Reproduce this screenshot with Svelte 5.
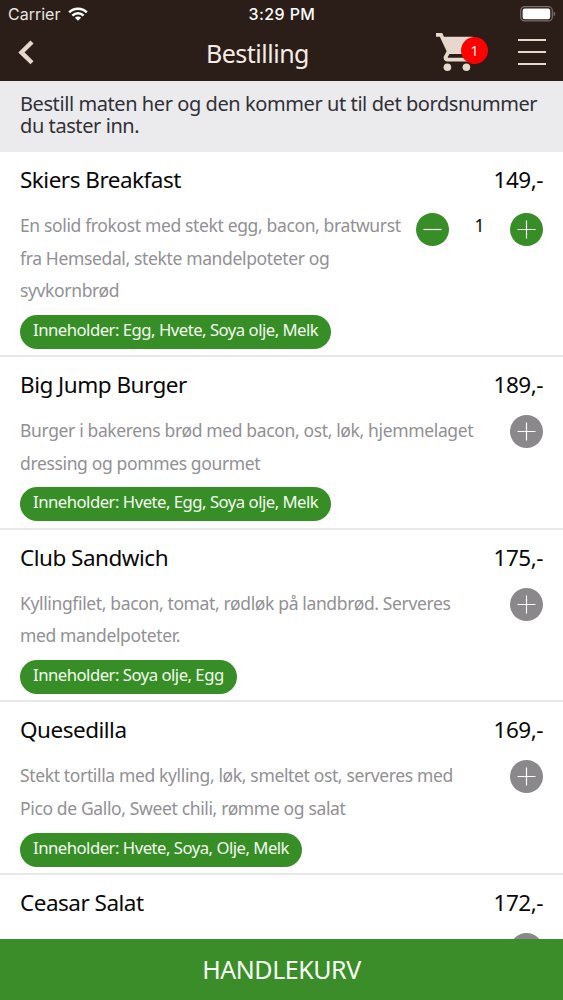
<script lang="ts">
  interface Dish {
    name: string;
    price: number;
    description: string;
    allergens: string;
    count: number;
  }

  let dishes: Dish[] = $state([
    {
      name: 'Skiers Breakfast',
      price: 149,
      description: 'En solid frokost med stekt egg, bacon, bratwurst\nfra Hemsedal, stekte mandelpoteter og\nsyvkornbrød',
      allergens: 'Egg, Hvete, Soya olje, Melk',
      count: 1
    },
    {
      name: 'Big Jump Burger',
      price: 189,
      description: 'Burger i bakerens brød med bacon, ost, løk, hjemmelaget\ndressing og pommes gourmet',
      allergens: 'Hvete, Egg, Soya olje, Melk',
      count: 0
    },
    {
      name: 'Club Sandwich',
      price: 175,
      description: 'Kyllingfilet, bacon, tomat, rødløk på landbrød. Serveres\nmed mandelpoteter.',
      allergens: 'Soya olje, Egg',
      count: 0
    },
    {
      name: 'Quesedilla',
      price: 169,
      description: 'Stekt tortilla med kylling, løk, smeltet ost, serveres med\nPico de Gallo, Sweet chili, rømme og salat',
      allergens: 'Hvete, Soya, Olje, Melk',
      count: 0
    },
    {
      name: 'Ceasar Salat',
      price: 172,
      description: '',
      allergens: '',
      count: 0
    }
  ]);

  let total = $derived(dishes.reduce((sum, dish) => sum + dish.count, 0));
</script>

<div class="screen">
  <header>
    <div class="status">
      <div class="carrier">
        <span>Carrier</span>
        <svg width="20" height="14" viewBox="0 0 20 14" fill="none" stroke="#fff" stroke-width="2.5">
          <path d="M1.2 5.4a12.4 12.4 0 0 1 17.6 0" />
          <path d="M4.4 8.6a7.9 7.9 0 0 1 11.2 0" />
          <path d="M10 13.8 6.9 10.7a4.4 4.4 0 0 1 6.2 0z" fill="#fff" stroke="none" />
        </svg>
      </div>
      <span class="time">3:29 PM</span>
      <svg class="battery" width="36" height="16" viewBox="0 0 36 16">
        <rect x="0.7" y="0.7" width="31.6" height="14.2" rx="4" fill="none" stroke="#77706c" stroke-width="1.2" />
        <rect x="2.6" y="2.6" width="27.6" height="10.6" rx="2.2" fill="#fff" />
        <path d="M33.6 5.2q1.7 1 1.7 2.6t-1.7 2.6z" fill="#77706c" />
      </svg>
    </div>

    <div class="nav">
      <button class="back" aria-label="Tilbake">
        <svg width="16" height="25" viewBox="0 0 16 25" fill="none" stroke="#e6d8cd" stroke-width="4.4">
          <path d="M14 2 3.4 12.4 14 22.8" />
        </svg>
      </button>
      <h1>Bestilling</h1>
      <button class="cart" aria-label="Handlekurv">
        <svg width="38" height="38" viewBox="1 2 20 20" fill="#e6d8cd">
          <path d="M1 2v2h2l3.600 7.590-1.350 2.450c-.16.280-.25.610-.25.960 0 1.100.9 2 2 2h12v-2H7.420c-.14 0-.25-.11-.25-.25l.03-.12.9-1.630h7.450c.75 0 1.410-.41 1.750-1.030l3.580-6.490A1 1 0 0 0 20 4H5.210l-.94-2H1z" />
          <circle cx="7" cy="20" r="2" />
          <circle cx="17" cy="20" r="2" />
        </svg>
        <span class="badge">{total}</span>
      </button>
      <button class="menu" aria-label="Meny">
        <i></i><i></i><i></i>
      </button>
    </div>
  </header>

  <p class="intro">Bestill maten her og den kommer ut til det bordsnummer<br />du taster inn.</p>

  <main>
    {#each dishes as dish}
      <article>
        <div class="heading">
          <h2>{dish.name}</h2>
          <span class="price">{dish.price},-</span>
        </div>
        <div class="details">
          <p class="description">{dish.description}</p>
          <div class="stepper" class:chosen={dish.count > 0}>
            {#if dish.count > 0}
              <button aria-label="Fjern" onclick={() => dish.count--}>
                <svg width="19" height="19" viewBox="0 0 19 19" stroke="#fff" stroke-width="1.2">
                  <path d="M.5 9.500h18" />
                </svg>
              </button>
              <span class="count">{dish.count}</span>
            {/if}
            <button aria-label="Legg til" onclick={() => dish.count++}>
              <svg width="19" height="19" viewBox="0 0 19 19" stroke="#fff" stroke-width="1.2">
                <path d="M.5 9.500h18M9.500 .5v18" />
              </svg>
            </button>
          </div>
        </div>
        {#if dish.allergens}
          <span class="allergens">Inneholder: {dish.allergens}</span>
        {/if}
      </article>
    {/each}
  </main>

  <button class="checkout">HANDLEKURV</button>
</div>

<style>
  :global(body) {
    margin: 0;
    background: #fff;
  }

  .screen {
    display: flex;
    flex-direction: column;
    height: 1000px;
    overflow: hidden;
    font-family: "Noto Sans", "Open Sans", sans-serif;
    color: #080808;
  }

  button {
    border: 0;
    padding: 0;
    background: none;
    font: inherit;
    color: inherit;
  }

  svg {
    display: block;
  }

  h1,
  h2,
  p {
    margin: 0;
    font-weight: 400;
  }

  header {
    flex: none;
    height: 81px;
    background: #2b1d18;
  }

  .status {
    display: grid;
    grid-template-columns: 1fr auto 1fr;
    align-items: center;
    height: 28px;
    padding: 0 7px 0 8px;
    font-family: Inter, "Liberation Sans", sans-serif;
    font-size: 16px;
    color: #fff;
  }

  .carrier {
    display: flex;
    align-items: center;
    gap: 8px;
    color: #e9e5e2;
  }

  .time {
    font-weight: 500;
    letter-spacing: 0.4px;
  }

  .battery {
    justify-self: end;
  }

  .nav {
    display: grid;
    grid-template-columns: 206px 1fr 59px 43px;
    align-items: center;
    height: 49px;
    padding-right: 9px;
  }

  .back {
    padding-left: 18px;
    justify-self: start;
  }

  h1 {
    font-size: 25px;
    line-height: 46px;
    letter-spacing: -0.5px;
    color: #f6ece4;
  }

  .cart {
    position: relative;
    justify-self: start;
    margin: -2px 0 0 -16px;
  }

  .badge {
    position: absolute;
    left: 25px;
    top: 4px;
    width: 27px;
    border-radius: 50%;
    background: #fe0000;
    color: #fff;
    font-size: 14px;
    line-height: 27px;
    text-align: center;
  }

  .menu {
    display: flex;
    flex-direction: column;
    gap: 10px;
    width: 28px;
    margin-top: -1px;
    justify-self: end;
    margin-right: 8px;
  }

  .menu i {
    height: 2px;
    background: #e6d8cd;
  }

  .intro {
    flex: none;
    box-sizing: border-box;
    height: 71px;
    padding: 12px 20px;
    background: #ebeaed;
    font-size: 20px;
    line-height: 22px;
    letter-spacing: -0.42px;
    color: #303136;
    white-space: nowrap;
  }

  main {
    flex: 1;
    min-height: 0;
    overflow: hidden;
  }

  article {
    padding: 0 20px 6.400px;
    border-bottom: 2px solid #e8e8ea;
  }

  .heading {
    display: flex;
    justify-content: space-between;
    height: 57px;
    font-size: 22.500px;
    line-height: 55px;
  }

  h2 {
    font-size: inherit;
    letter-spacing: -0.5px;
  }

  .price {
    letter-spacing: -0.5px;
  }

  .details {
    display: flex;
    justify-content: space-between;
  }

  .description {
    font-size: 17.500px;
    line-height: 32.600px;
    letter-spacing: -0.36px;
    color: #929095;
    white-space: pre;
  }

  .stepper {
    display: flex;
    flex: none;
    height: 33px;
    margin-top: 1px;
  }

  .stepper.chosen {
    margin-top: 4px;
  }

  .stepper button {
    display: grid;
    place-items: center;
    width: 33px;
    height: 33px;
    border-radius: 50%;
    background: #8a888b;
  }

  .stepper.chosen button {
    background: #388e26;
  }

  .count {
    width: 61px;
    font-size: 17.500px;
    line-height: 25px;
    text-align: center;
  }

  .allergens {
    display: block;
    width: fit-content;
    height: 34px;
    margin-top: 8px;
    padding: 0 13px;
    border-radius: 17px;
    background: #388e26;
    font-size: 16.700px;
    line-height: 30px;
    letter-spacing: -0.5px;
    color: #f3fbf0;
    white-space: nowrap;
  }

  .checkout {
    flex: none;
    height: 61px;
    background: #3b8d2a;
    font-size: 25px;
    line-height: 61px;
    letter-spacing: -0.45px;
    color: #f7fff5;
  }
</style>
